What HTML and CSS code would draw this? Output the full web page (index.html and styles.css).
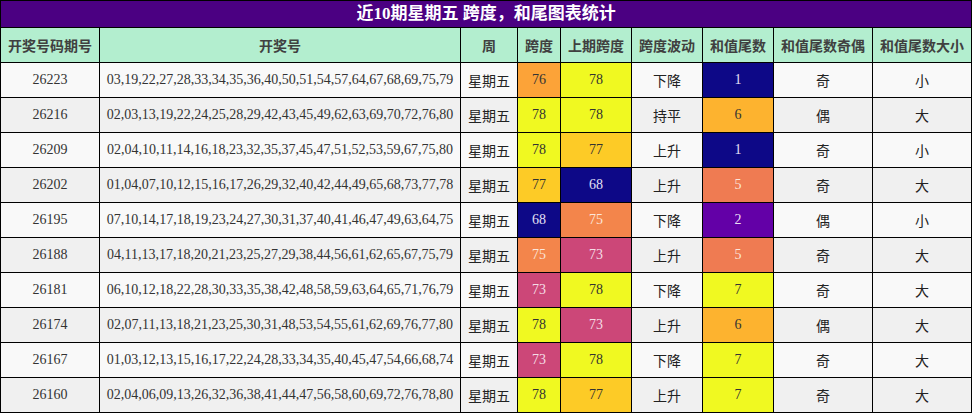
FILE: index.html
```html
<!DOCTYPE html>
<html lang="zh">
<head>
<meta charset="utf-8">
<title>近10期星期五 跨度，和尾图表统计</title>
<link rel="stylesheet" href="styles.css">
</head>
<body>
<table class="stats">
  <colgroup>
    <col class="c-issue">
    <col class="c-nums">
    <col class="c-week">
    <col class="c-span">
    <col class="c-prev">
    <col class="c-wave">
    <col class="c-tail">
    <col class="c-oe">
    <col class="c-bs">
  </colgroup>
  <thead>
    <tr><th class="title" colspan="9">近10期星期五 跨度，和尾图表统计</th></tr>
    <tr class="head">
      <th>开奖号码期号</th>
      <th>开奖号</th>
      <th>周</th>
      <th>跨度</th>
      <th>上期跨度</th>
      <th>跨度波动</th>
      <th>和值尾数</th>
      <th>和值尾数奇偶</th>
      <th>和值尾数大小</th>
    </tr>
  </thead>
  <tbody>
    <tr><td>26223</td><td>03,19,22,27,28,33,34,35,36,40,50,51,54,57,64,67,68,69,75,79</td><td class="cjk">星期五</td><td class="v76">76</td><td class="v78">78</td><td class="cjk">下降</td><td class="t1">1</td><td class="cjk">奇</td><td class="cjk">小</td></tr>
    <tr><td>26216</td><td>02,03,13,19,22,24,25,28,29,42,43,45,49,62,63,69,70,72,76,80</td><td class="cjk">星期五</td><td class="v78">78</td><td class="v78">78</td><td class="cjk">持平</td><td class="t6">6</td><td class="cjk">偶</td><td class="cjk">大</td></tr>
    <tr><td>26209</td><td>02,04,10,11,14,16,18,23,32,35,37,45,47,51,52,53,59,67,75,80</td><td class="cjk">星期五</td><td class="v78">78</td><td class="v77">77</td><td class="cjk">上升</td><td class="t1">1</td><td class="cjk">奇</td><td class="cjk">小</td></tr>
    <tr><td>26202</td><td>01,04,07,10,12,15,16,17,26,29,32,40,42,44,49,65,68,73,77,78</td><td class="cjk">星期五</td><td class="v77">77</td><td class="v68">68</td><td class="cjk">上升</td><td class="t5">5</td><td class="cjk">奇</td><td class="cjk">大</td></tr>
    <tr><td>26195</td><td>07,10,14,17,18,19,23,24,27,30,31,37,40,41,46,47,49,63,64,75</td><td class="cjk">星期五</td><td class="v68">68</td><td class="v75">75</td><td class="cjk">下降</td><td class="t2">2</td><td class="cjk">偶</td><td class="cjk">小</td></tr>
    <tr><td>26188</td><td>04,11,13,17,18,20,21,23,25,27,29,38,44,56,61,62,65,67,75,79</td><td class="cjk">星期五</td><td class="v75">75</td><td class="v73">73</td><td class="cjk">上升</td><td class="t5">5</td><td class="cjk">奇</td><td class="cjk">大</td></tr>
    <tr><td>26181</td><td>06,10,12,18,22,28,30,33,35,38,42,48,58,59,63,64,65,71,76,79</td><td class="cjk">星期五</td><td class="v73">73</td><td class="v78">78</td><td class="cjk">下降</td><td class="t7">7</td><td class="cjk">奇</td><td class="cjk">大</td></tr>
    <tr><td>26174</td><td>02,07,11,13,18,21,23,25,30,31,48,53,54,55,61,62,69,76,77,80</td><td class="cjk">星期五</td><td class="v78">78</td><td class="v73">73</td><td class="cjk">上升</td><td class="t6">6</td><td class="cjk">偶</td><td class="cjk">大</td></tr>
    <tr><td>26167</td><td>01,03,12,13,15,16,17,22,24,28,33,34,35,40,45,47,54,66,68,74</td><td class="cjk">星期五</td><td class="v73">73</td><td class="v78">78</td><td class="cjk">下降</td><td class="t7">7</td><td class="cjk">奇</td><td class="cjk">大</td></tr>
    <tr><td>26160</td><td>02,04,06,09,13,26,32,36,38,41,44,47,56,58,60,69,72,76,78,80</td><td class="cjk">星期五</td><td class="v78">78</td><td class="v77">77</td><td class="cjk">上升</td><td class="t7">7</td><td class="cjk">奇</td><td class="cjk">大</td></tr>
  </tbody>
</table>
</body>
</html>
```

FILE: styles.css
```css
html, body {
  margin: 0;
  padding: 0;
  background: #ffffff;
}

.stats {
  width: 972px;
  table-layout: fixed;
  border-collapse: separate;
  border-spacing: 0;
  border-left: 1px solid #000;
  border-top: 1px solid #000;
  font-family: "Liberation Serif", "Noto Sans CJK SC", serif;
  font-size: 14px;
  color: #333;
}

.c-issue { width: 99px; }
.c-nums { width: 361px; }
.c-week { width: 57px; }
.c-span { width: 43px; }
.c-prev { width: 71px; }
.c-wave { width: 71px; }
.c-tail { width: 71px; }
.c-oe { width: 99px; }
.c-bs { width: 99px; }

.stats th,
.stats td {
  box-sizing: border-box;
  border-right: 1px solid #000;
  border-bottom: 1px solid #000;
  padding: 0;
  text-align: center;
  vertical-align: middle;
  white-space: nowrap;
  overflow: hidden;
}

.stats .title {
  height: 27px;
  background: #4b0082;
  color: #ffffff;
  font-size: 17px;
  font-weight: bold;
  line-height: 26px;
}

.head th {
  height: 35px;
  background: #b3eecf;
  color: #404040;
  font-family: "Noto Sans CJK SC", sans-serif;
  font-weight: bold;
  font-size: 14px;
}

.stats tbody tr td {
  height: 35px;
  background: #f9f9f9;
}

.stats tbody tr:nth-child(even) td {
  background: #f0f0f0;
}

.stats tbody tr td.cjk {
  font-family: "Noto Sans CJK SC", sans-serif;
  color: #222;
}

/* span colours (plasma scale) */
.stats tbody tr td.v68 { background: #0d0887; color: #e4e0f4; }
.stats tbody tr td.v73 { background: #cc4778; color: #f4dde6; }
.stats tbody tr td.v75 { background: #f3854b; color: #fbe6da; }
.stats tbody tr td.v76 { background: #fca338; color: #333; }
.stats tbody tr td.v77 { background: #fdcb26; color: #333; }
.stats tbody tr td.v78 { background: #f0f921; color: #333; }

/* tail colours */
.stats tbody tr td.t1 { background: #0d0887; color: #e4e0f4; }
.stats tbody tr td.t2 { background: #6300a7; color: #eadff4; }
.stats tbody tr td.t5 { background: #ef7b52; color: #fbe6da; }
.stats tbody tr td.t6 { background: #fdb32f; color: #333; }
.stats tbody tr td.t7 { background: #f0f921; color: #333; }
```
